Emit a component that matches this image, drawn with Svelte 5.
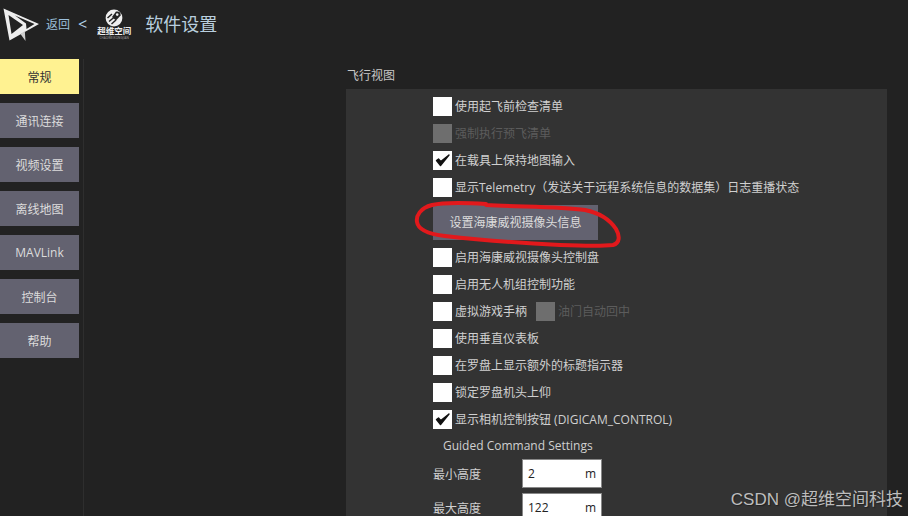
<script>
  const nav = ['常规', '通讯连接', '视频设置', '离线地图', 'MAVLink', '控制台', '帮助'];
  const top = [
    { label: '使用起飞前检查清单' },
    { label: '强制执行预飞清单', disabled: true },
    { label: '在载具上保持地图输入', checked: true },
    { label: '显示Telemetry（发送关于远程系统信息的数据集）日志重播状态' }
  ];
  const bottom = [
    { label: '启用海康威视摄像头控制盘' },
    { label: '启用无人机组控制功能' },
    { label: '虚拟游戏手柄', extra: '油门自动回中' },
    { label: '使用垂直仪表板' },
    { label: '在罗盘上显示额外的标题指示器' },
    { label: '锁定罗盘机头上仰' },
    { label: '显示相机控制按钮 (DIGICAM_CONTROL)', checked: true }
  ];
  const fields = [
    { label: '最小高度', value: '2' },
    { label: '最大高度', value: '122' }
  ];
</script>

{#snippet box(checked, disabled)}
  <span class="box" class:off={disabled}>
    {#if checked}
      <svg viewBox="0 0 19 19" width="19" height="19"><path d="M3.5 9.5 L7.5 14.5 L16 4 L7.8 10.6 L5.5 8 Z" fill="#111" stroke="#111" stroke-width="1.4" stroke-linejoin="round"/></svg>
    {/if}
  </span>
{/snippet}

{#snippet row(item)}
  <div class="row">
    {@render box(item.checked, item.disabled)}
    <span class="lbl" class:dim={item.disabled}>{item.label}</span>
    {#if item.extra}
      <span class="extra">
        {@render box(false, true)}
        <span class="lbl dim">{item.extra}</span>
      </span>
    {/if}
  </div>
{/snippet}

<div class="page">
  <header>
    <svg class="plane" viewBox="0 0 40 42" width="40" height="42">
      <path fill-rule="evenodd" d="M2.5 5.5 L38 21 L8.5 37.5 Z M7.5 12 L10.5 31 L22 22 Z M14 12.5 L25 20.5 L25.5 26 L33.5 21 Z" fill="#eee"/>
      <path d="M19.5 31 L24.5 38 L23.8 28 Z" fill="#cfcfcf"/>
    </svg>
    <span class="back">返回</span>
    <span class="lt">&lt;</span>
    <div class="brand">
      <svg viewBox="0 0 18 18" width="18" height="18">
        <circle cx="9" cy="9" r="8.4" fill="#eee"/>
        <path d="M11 2.5 C14 2 16 3 15.6 6.5 L11 11.5 L7 8 Z" fill="#222"/>
        <path d="M2.5 9 L7 5 M4 12.5 L9.5 8 M6.5 15 L11 11" stroke="#222" stroke-width="1.5"/>
        <circle cx="12.2" cy="5.6" r="1.3" fill="#eee"/>
      </svg>
      <span class="cn">超维空间</span>
      <span class="en">CHAOWEIKONGJIAN</span>
    </div>
    <span class="title">软件设置</span>
  </header>

  <div class="body">
    <nav>
      {#each nav as item, i}
        <div class="nav" class:active={i === 0}>{item}</div>
      {/each}
    </nav>
    <main>
      <div class="heading">飞行视图</div>
      <section>
        {#each top as item}{@render row(item)}{/each}
        <div class="action">设置海康威视摄像头信息</div>
        {#each bottom as item}{@render row(item)}{/each}
        <div class="guided">Guided Command Settings</div>
        {#each fields as f}
          <div class="field">
            <span class="name">{f.label}</span>
            <span class="input"><span>{f.value}</span><span>m</span></span>
          </div>
        {/each}
      </section>
    </main>
  </div>

  <svg class="scribble" viewBox="0 0 908 516" width="908" height="516">
    <path d="M486 204 C470 203 445 202 432 205 C420 208 416 216 417 222 C418 229 428 234 445 236 C480 240 520 243 560 245 C585 246 605 246 613 245 C620 243 620 236 616 229 C610 220 600 213 585 210 C560 206 520 207 486 205" fill="none" stroke="#e2191c" stroke-width="4" stroke-linecap="round"/>
  </svg>
  <div class="mark">CSDN @超维空间科技</div>
</div>

<style>
  :global(body) { margin: 0; background: #222; }
  .page {
    position: relative;
    width: 908px;
    height: 516px;
    overflow: hidden;
    background: #222;
    color: #d0d0d0;
    font: 12px "Open Sans", "Noto Sans CJK SC", sans-serif;
  }
  header {
    display: flex;
    align-items: center;
    height: 48px;
    padding-left: 1px;
  }
  .plane { flex: none; }
  .back { margin-left: 5px; color: #9cc0dc; font-size: 12px; }
  .lt { margin-left: 8px; color: #b4d2e8; font-size: 16px; }
  .brand {
    display: flex;
    flex-direction: column;
    align-items: center;
    width: 36px;
    margin-left: 9px;
    margin-top: 1px;
    line-height: 1;
  }
  .brand .cn { font-size: 8.5px; font-weight: 700; color: #eee; white-space: nowrap; }
  .brand .en { font-size: 3px; color: #aaa; white-space: nowrap; margin-top: 1px; letter-spacing: 0.1px; }
  .title { margin-left: 13px; margin-top: -2px; font-size: 18px; color: #b9cfdf; }
  .body { display: flex; height: 468px; }
  nav {
    flex: none;
    width: 79px;
    padding-top: 11px;
    display: flex;
    flex-direction: column;
    gap: 9px;
  }
  .nav {
    height: 35px;
    display: flex;
    align-items: center;
    justify-content: center;
    background: #636270;
    color: #dcdcdc;
    font-size: 12px;
  }
  .nav.active { background: #fff291; color: #333; }
  main {
    margin-left: 4px;
    margin-top: 11px;
    padding-left: 262px;
    border-left: 1px solid #2e2e2e;
    flex: 1;
  }
  .heading { height: 30px; padding: 10px 0 0 1px; box-sizing: border-box; line-height: 14px; font-size: 12px; color: #c8c8c8; }
  section {
    width: 541px;
    height: 430px;
    background: #333;
    padding: 8px 0 0 87px;
    box-sizing: border-box;
  }
  .row { display: flex; align-items: center; height: 19px; margin-bottom: 8px; }
  .box {
    flex: none;
    width: 19px;
    height: 19px;
    background: #fff;
    display: block;
  }
  .box svg { display: block; }
  .box.off { background: #6e6e6e; }
  .lbl { margin-left: 3px; margin-top: -2px; font-size: 12px; color: #d0d0d0; white-space: nowrap; }
  .lbl.dim { color: #5c5c5c; }
  .extra { display: flex; align-items: center; margin-left: 9px; }
  .action {
    width: 165px;
    height: 35px;
    margin-bottom: 8px;
    padding-bottom: 2px;
    box-sizing: border-box;
    display: flex;
    align-items: center;
    justify-content: center;
    background: #636270;
    color: #dcdcdc;
    font-size: 12px;
  }
  .guided { height: 18px; margin: 0 0 4px 10px; line-height: 18px; font-size: 12px; color: #d0d0d0; }
  .field { display: flex; align-items: center; height: 29px; margin-bottom: 5px; }
  .name { width: 89px; font-size: 12px; }
  .input {
    width: 80px;
    height: 29px;
    box-sizing: border-box;
    display: flex;
    align-items: center;
    justify-content: space-between;
    padding: 0 5px;
    background: #fff;
    border: 1px solid #888;
    color: #222;
    font-size: 12px;
  }
  .scribble { position: absolute; left: 0; top: 0; pointer-events: none; }
  .mark {
    position: absolute;
    right: 5px;
    bottom: 6px;
    font: 17px "Liberation Sans", "Noto Sans CJK SC", sans-serif;
    color: #bdbdbd;
    text-shadow: 1px 1px 1px #222;
    white-space: nowrap;
  }
</style>
